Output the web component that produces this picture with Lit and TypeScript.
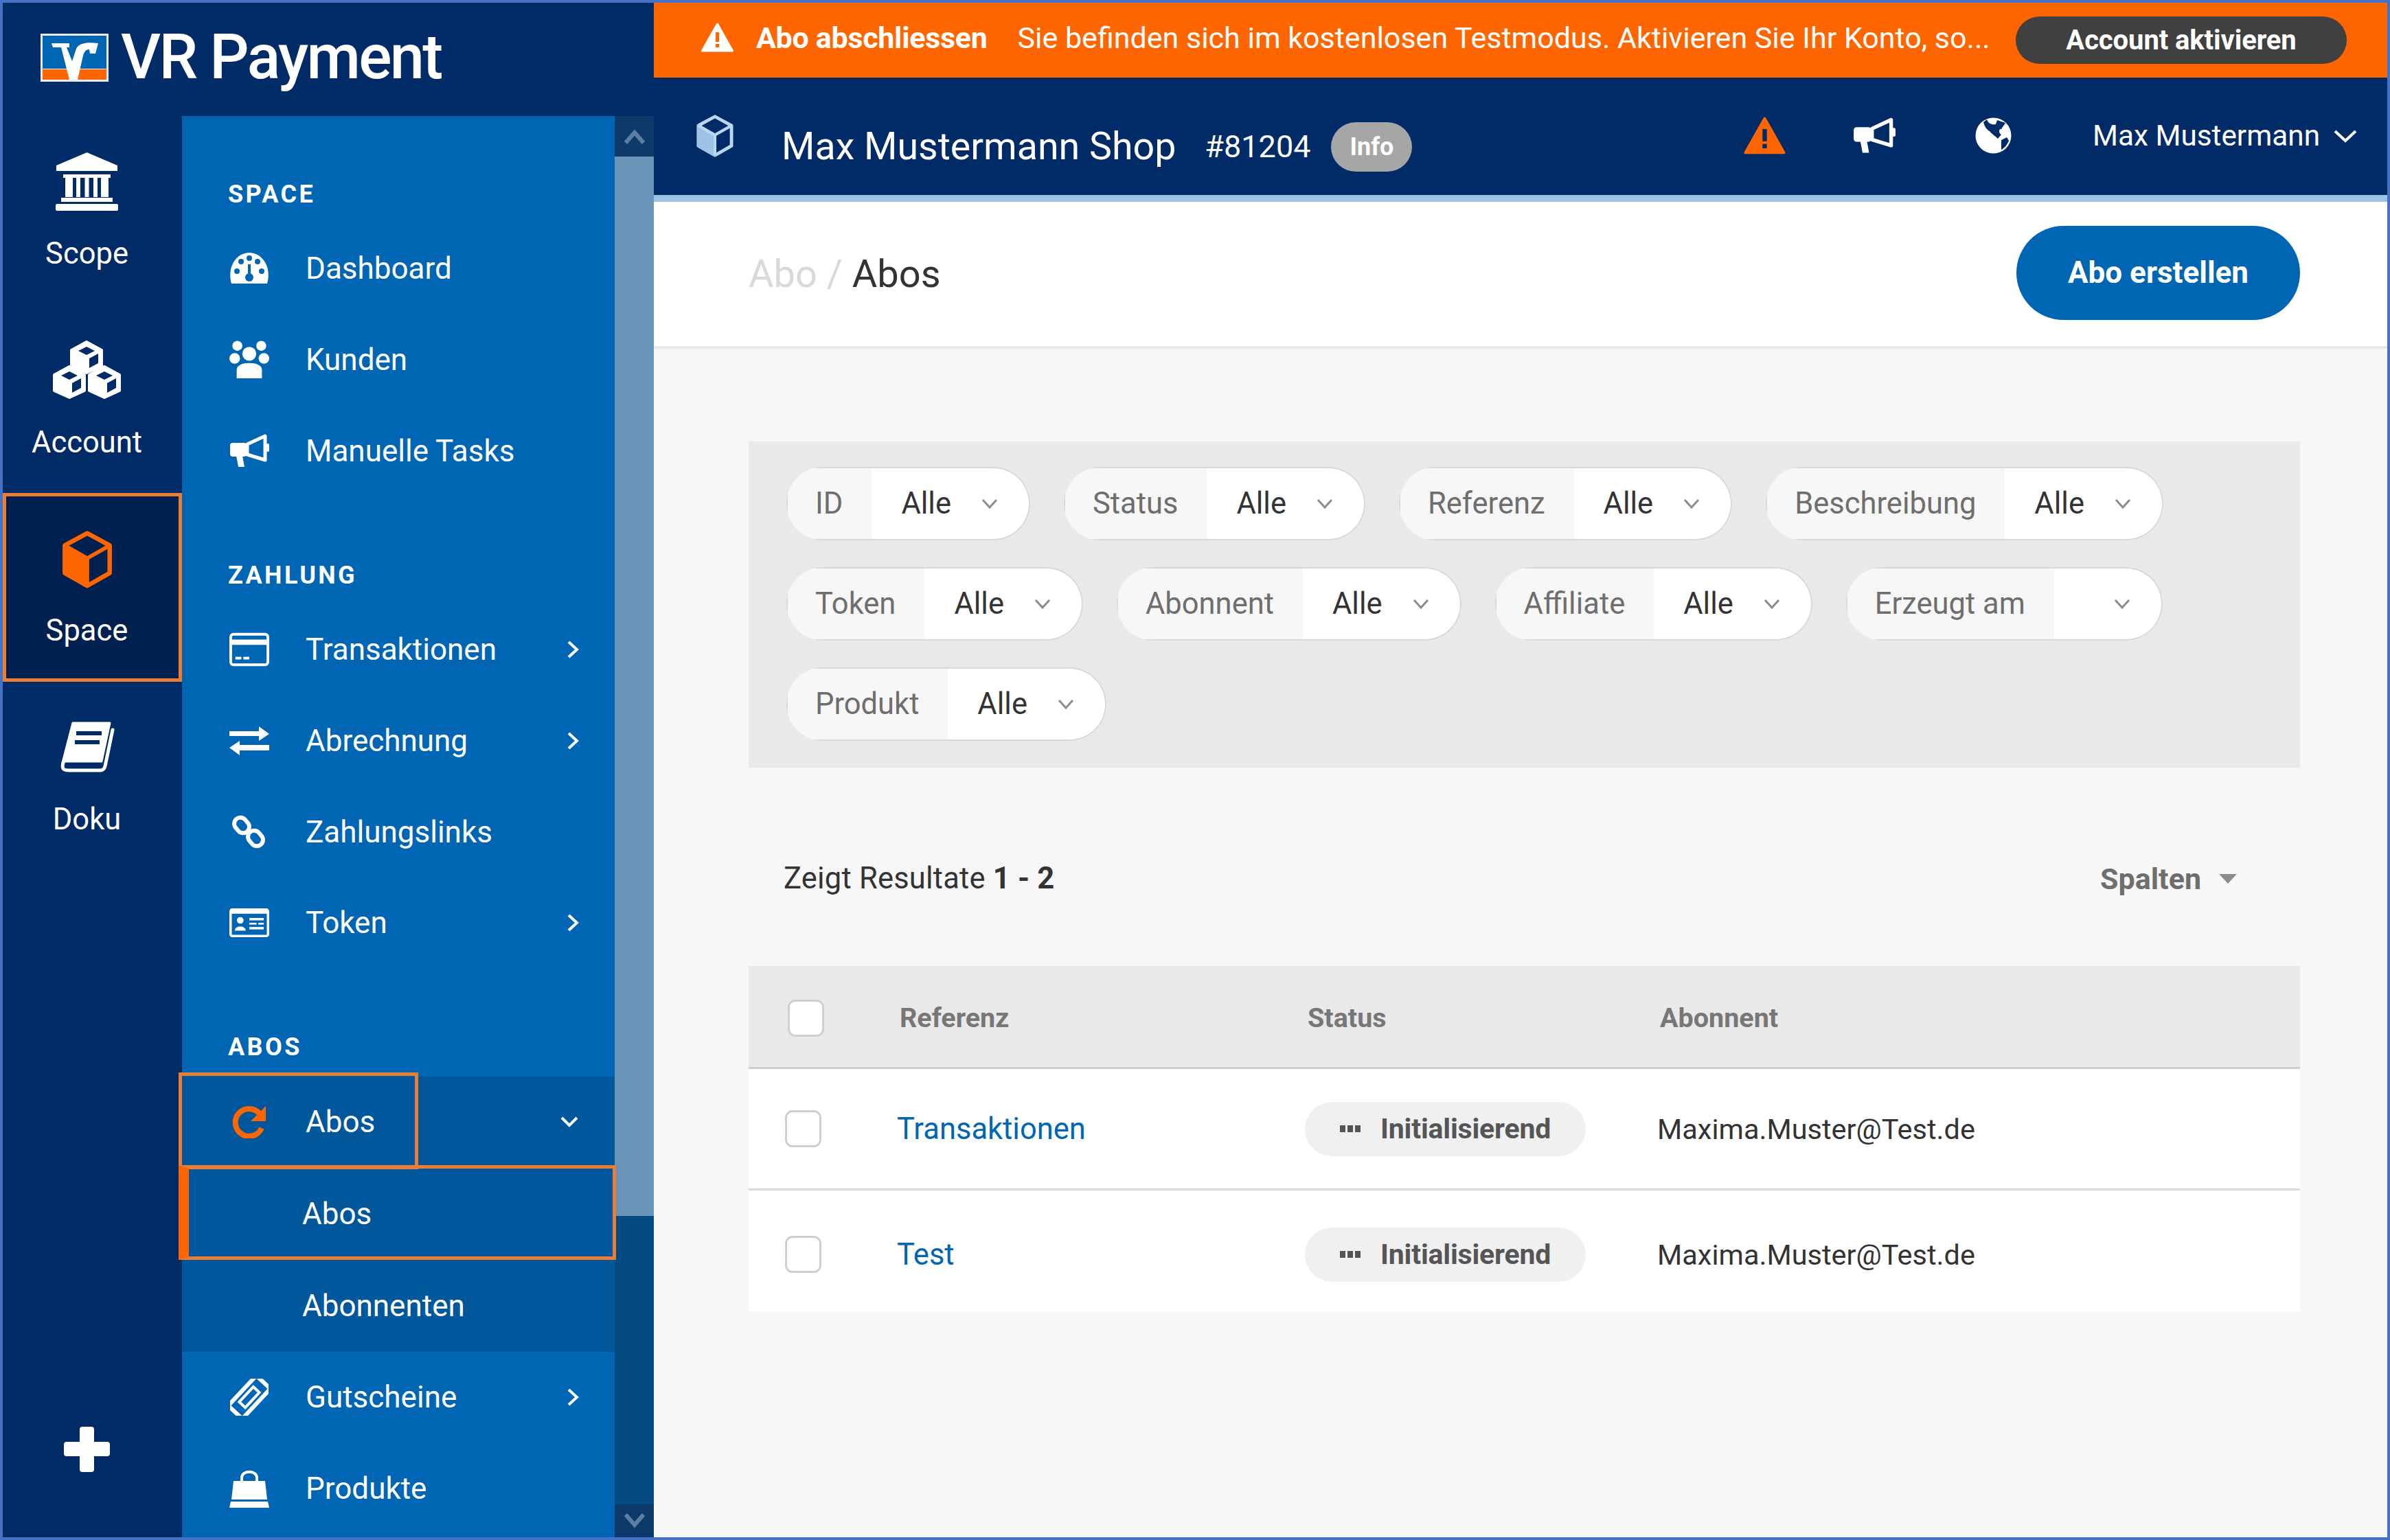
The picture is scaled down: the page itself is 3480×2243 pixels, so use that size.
import { LitElement, html, css, svg } from "lit";
import { customElement } from "lit/decorators.js";

const cube = (stroke: string, face: string, w: number, h: number) => html`<svg width=${w} height=${h} viewBox="0 0 80 90">
  <polygon points="40,4 75,23 75,66 40,86 5,66 5,23" fill="none" stroke=${stroke} stroke-width="7" stroke-linejoin="round"/>
  <polygon points="5,23 40,43 40,86 5,66" fill=${face} stroke=${face} stroke-width="5" stroke-linejoin="round"/>
  <polyline points="5,23 40,43 75,23" fill="none" stroke=${stroke} stroke-width="6"/>
  <line x1="40" y1="43" x2="40" y2="86" stroke=${stroke} stroke-width="6"/>
</svg>`;

const miniCube = (cx: number, cy: number) => svg`
  <polygon points="${cx},${cy - 22} ${cx + 22},${cy - 10} ${cx + 22},${cy + 13} ${cx},${cy + 23} ${cx - 22},${cy + 13} ${cx - 22},${cy - 10}" fill="#fff" stroke="#fff" stroke-width="4" stroke-linejoin="round"/>
  <polygon points="${cx},${cy - 15} ${cx + 12},${cy - 9} ${cx},${cy - 3} ${cx - 12},${cy - 9}" fill="#002B67"/>
  <polygon points="${cx + 4},${cy + 2} ${cx + 17},${cy - 5} ${cx + 17},${cy + 9} ${cx + 4},${cy + 16}" fill="#002B67"/>`;

const scopeIcon = html`<svg width="91" height="85" viewBox="0 0 91 85" fill="#fff">
  <polygon points="45.5,0 90,19 90,27 1,27 1,19"/>
  <rect x="11" y="32" width="69" height="5"/>
  <rect x="14" y="37" width="11" height="28"/><rect x="30" y="37" width="6" height="28"/>
  <rect x="42.5" y="37" width="6" height="28"/><rect x="55" y="37" width="6" height="28"/>
  <rect x="66" y="37" width="11" height="28"/>
  <rect x="8" y="66" width="75" height="6"/><rect x="0" y="75" width="91" height="10" rx="2"/>
</svg>`;

const accountIcon = html`<svg width="103" height="86" viewBox="0 0 103 86">
  ${miniCube(51, 24)}${miniCube(26, 60)}${miniCube(77, 60)}
</svg>`;

const bookIcon = html`<svg width="81" height="74" viewBox="0 0 81 74">
  <path d="M20 2 H74 L62 58 H10 C8 58 6 59 5 60 Z" fill="#fff" stroke="#fff" stroke-width="3" stroke-linejoin="round"/>
  <path d="M6 60 C3 70 8 71 14 71 H60 C64 71 66 69 67 65 L78 12" fill="none" stroke="#fff" stroke-width="5" stroke-linecap="round"/>
  <rect x="25" y="14" width="37" height="6" fill="#002B67"/><rect x="23" y="27" width="36" height="6" fill="#002B67"/>
</svg>`;

const plusIcon = html`<svg width="67" height="66" viewBox="0 0 67 66" fill="#fff">
  <rect x="23" y="0" width="21" height="66" rx="4"/><rect x="0" y="22" width="67" height="21" rx="4"/>
</svg>`;

const blue = "#0066B3";
const ic: Record<string, unknown> = {
  gauge: html`<svg width="58" height="46" viewBox="0 0 58 46">
    <path d="M3 45 C-4 20 11 0 29 0 C47 0 62 20 55 45 Z" fill="#fff"/>
    <g fill=${blue}><circle cx="11" cy="27" r="4"/><circle cx="17" cy="13" r="4"/><circle cx="29" cy="8" r="4"/><circle cx="41" cy="13" r="4"/><circle cx="47" cy="27" r="4"/><circle cx="29" cy="36" r="6"/><rect x="27" y="17" width="4" height="18"/></g>
  </svg>`,
  users: html`<svg width="60" height="58" viewBox="0 0 60 58" fill="#fff">
    <circle cx="12" cy="8" r="7.5"/><circle cx="48" cy="8" r="7.5"/><ellipse cx="8" cy="27" rx="8" ry="8"/><ellipse cx="52" cy="27" rx="8" ry="8"/>
    <circle cx="30" cy="20" r="12" stroke=${blue} stroke-width="3"/>
    <path d="M10 58 V44 C10 36 20 33 30 33 C40 33 50 36 50 44 V58 Z" stroke=${blue} stroke-width="2"/>
  </svg>`,
  horn: html`<svg width="58" height="50" viewBox="0 0 58 50">
    <path d="M26 15 L52 3 V38 L26 30 Z" fill="none" stroke="#fff" stroke-width="5" stroke-linejoin="round"/>
    <rect x="1" y="13" width="24" height="20" rx="4" fill="#fff"/><path d="M10 32 H19 L22 48 H13 Z" fill="#fff"/>
    <rect x="53" y="14" width="5" height="12" rx="2" fill="#fff"/>
  </svg>`,
  card: html`<svg width="60" height="50" viewBox="0 0 60 50">
    <rect x="2" y="2" width="56" height="46" rx="4" fill="none" stroke="#fff" stroke-width="4"/>
    <rect x="2" y="10" width="56" height="8" fill="#fff"/><rect x="9" y="36" width="9" height="4" fill="#fff"/><rect x="21" y="36" width="9" height="4" fill="#fff"/>
  </svg>`,
  swap: html`<svg width="58" height="42" viewBox="0 0 58 42" fill="#fff">
    <path d="M0 7 H43 V0 L58 11 L43 21 V14 H0 Z"/><path d="M58 27 H15 V21 L0 31 L15 42 V35 H58 Z"/>
  </svg>`,
  link: html`<svg width="54" height="54" viewBox="0 0 54 54" fill="none" stroke="#fff" stroke-width="6">
    <rect x="4" y="8" width="24" height="18" rx="9" transform="rotate(50 16 17)"/>
    <rect x="24" y="27" width="24" height="18" rx="9" transform="rotate(50 36 36)"/>
  </svg>`,
  id: html`<svg width="66" height="48" viewBox="0 0 66 48">
    <rect x="2" y="2" width="62" height="44" rx="3" fill="none" stroke="#fff" stroke-width="4"/><rect x="2" y="2" width="62" height="7" fill="#fff"/>
    <circle cx="18" cy="20" r="5.5" fill="#fff"/><path d="M9 37 C9 28 27 28 27 37 Z" fill="#fff"/>
    <g fill="#fff"><rect x="33" y="16" width="24" height="4"/><rect x="33" y="24" width="12" height="3"/><rect x="48" y="24" width="9" height="3"/><rect x="33" y="31" width="24" height="4"/></g>
  </svg>`,
  refresh: html`<svg width="51" height="48" viewBox="0 0 51 48">
    <path d="M40 12 A 20 20 0 1 0 43 33" fill="none" stroke="#FF6600" stroke-width="8"/><polygon points="49,1 49,23 27,23" fill="#FF6600"/>
  </svg>`,
  ticket: html`<svg width="56" height="54" viewBox="0 0 56 54">
    <g transform="rotate(-47 28 27)" fill="none" stroke="#fff"><rect x="-2" y="13" width="60" height="28" rx="3" stroke-width="6"/><rect x="13" y="21" width="30" height="12" stroke-width="4"/></g>
  </svg>`,
  bag: html`<svg width="58" height="56" viewBox="0 0 58 56">
    <path d="M18 22 V12 C18 1 40 1 40 12 V22" fill="none" stroke="#fff" stroke-width="4"/>
    <polygon points="6,17 52,17 55,44 3,44" fill="#fff"/><polygon points="2,47 56,47 58,56 0,56" fill="#fff"/>
  </svg>`,
};

const chevR = html`<svg class="chev" width="18" height="26" viewBox="0 0 18 26"><path d="M3 2 L15 13 L3 24" fill="none" stroke="#fff" stroke-width="4"/></svg>`;
const chevD = html`<svg class="chev" width="28" height="18" viewBox="0 0 28 18"><path d="M3 3 L14 14 L25 3" fill="none" stroke="#fff" stroke-width="4"/></svg>`;

const warn = (bg: string, mark: string, w: number, h: number) => html`<svg width=${w} height=${h} viewBox="0 0 47 43">
  <polygon points="23.5,2 45.5,41 1.5,41" fill=${bg} stroke=${bg} stroke-width="3" stroke-linejoin="round"/>
  <rect x="21" y="14" width="5" height="14" fill=${mark}/><rect x="21" y="31" width="5" height="5" fill=${mark}/>
</svg>`;

const logo = html`<svg width="99" height="70" viewBox="0 0 99 70">
  <rect width="99" height="70" fill="#e8eef5"/><rect x="3" y="3" width="93" height="48" fill="#0066B3"/><rect x="3" y="52" width="93" height="15" fill="#FF6600"/>
  <path d="M16 14 H42 V20 H38 L46 40 L52 22 C56 14 66 12 84 14 L80 29 H72 L71 23 C66 23 64 26 62 32 L54 67 H42 L30 20 H18 Z" fill="#fff"/>
</svg>`;

const sections = [
  { t: "SPACE", rows: [{ i: "gauge", l: "Dashboard" }, { i: "users", l: "Kunden" }, { i: "horn", l: "Manuelle Tasks" }] },
  { t: "ZAHLUNG", rows: [{ i: "card", l: "Transaktionen", c: 1 }, { i: "swap", l: "Abrechnung", c: 1 }, { i: "link", l: "Zahlungslinks" }, { i: "id", l: "Token", c: 1 }] },
];
const filters = [["ID", "Alle"], ["Status", "Alle"], ["Referenz", "Alle"], ["Beschreibung", "Alle"], ["Token", "Alle"], ["Abonnent", "Alle"], ["Affiliate", "Alle"], ["Erzeugt am", ""], ["Produkt", "Alle"]];
const rowsData = ["Transaktionen", "Test"];

@customElement("app-root")
export class AppRoot extends LitElement {
  static styles = css`
    :host { display: block; width: 3480px; height: 2243px; box-sizing: border-box; border: 4px solid #4472C4; overflow: hidden;
      font-family: Roboto, "Noto Sans", sans-serif; font-size: 43.5px; color: #333; background: #F7F7F7; }
    .app { display: flex; height: 100%; }
    .left { width: 948px; flex: none; display: flex; flex-direction: column; background: #002B67; color: #fff; }
    .brand { height: 165px; flex: none; display: flex; align-items: center; gap: 18px; padding: 0 0 6px 55px; box-sizing: border-box; }
    .brand span { font-size: 90px; font-weight: 500; letter-spacing: -2.6px; line-height: 1; }
    .lower { flex: 1; min-height: 0; display: flex; overflow: hidden; }
    .rail { width: 261px; flex: none; display: flex; flex-direction: column; }
    .ri { height: 274.5px; flex: none; box-sizing: border-box; display: flex; flex-direction: column; align-items: center; padding-right: 16px; }
    .ri .ico { height: 190px; flex: none; display: flex; align-items: center; justify-content: center; }
    .ri .lab { margin-top: -25px; line-height: 72px; }
    .ri.sel { background: #002050; box-shadow: inset 0 0 0 5px #ED7D31; }
    .ri.sel .ico { padding-top: 4px; box-sizing: border-box; }
    .plus { margin-top: auto; padding: 0 16px 95px 0; display: flex; justify-content: center; }
    .side { width: 630px; flex: none; background: #0066B3; }
    .sec { padding-top: 72px; }
    .sec.first { padding-top: 71px; }
    .sec h3 { margin: 0; height: 85px; padding-left: 67px; display: flex; align-items: center; font-size: 36px; font-weight: 700; letter-spacing: 3.4px; line-height: 1; }
    .row { height: 132.7px; display: flex; align-items: center; position: relative; padding: 0 52px 0 69px; box-sizing: border-box; }
    .row .ib { width: 58px; flex: none; display: flex; justify-content: center; }
    .row .tx { margin-left: 53px; font-size: 44px; }
    .row .chev { margin-left: auto; }
    .group { background: #00579B; }
    .row.sub { padding-left: 175px; height: 134px; font-size: 44px; }
    .mark { position: absolute; top: -6px; bottom: -2px; left: -5px; border: 5px solid #ED7D31; box-sizing: border-box; pointer-events: none; z-index: 2; }
    .mark.a { width: 349px; }
    .mark.b { top: -4px; bottom: 0; right: -2px; border-left: 15px solid #FF6600; }
    .scroll { width: 57px; flex: none; display: flex; flex-direction: column; }
    .sb { flex: none; display: flex; align-items: center; justify-content: center; background: #0B3A6B; }
    .sb.up { height: 59px; }
    .sb.down { height: 48px; }
    .thumb { height: 1543px; flex: none; background: #6A93B8; }
    .track { flex: 1; background: #044A83; }
    .main { flex: 1; min-width: 0; display: flex; flex-direction: column; }
    .banner { height: 109px; flex: none; background: #FF6600; color: #fff; display: flex; align-items: center; padding: 0 59px 8px 69px; box-sizing: border-box; }
    .banner b { margin-left: 33px; font-size: 43px; font-weight: 700; letter-spacing: -0.3px; }
    .banner .msg { margin-left: 44px; font-size: 43px; }
    .btn-dark { margin: 8px 0 0 auto; width: 482px; height: 69px; border-radius: 35px; background: #404040; display: flex; align-items: center; justify-content: center; font-size: 40px; font-weight: 700; letter-spacing: -0.1px; }
    .nav { height: 181px; flex: none; box-sizing: border-box; background: #002B67; color: #fff; border-bottom: 10px solid #9DC3E6; display: flex; align-items: center; padding: 30px 44px 0 58px; }
    .nav .shop { margin-left: 66px; font-size: 55.5px; }
    .nav .num { margin-left: 42px; font-size: 45px; }
    .badge { margin-left: 30px; width: 118px; height: 72px; border-radius: 36px; background: #A6A6A6; display: flex; align-items: center; justify-content: center; font-size: 36px; font-weight: 700; }
    .nav .cube { margin-bottom: 32px; display: flex; }
    .tools { margin: 0 0 32px auto; display: flex; align-items: center; font-size: 42.3px; }
    .tools .w { margin-right: 98px; display: flex; }
    .tools .m { margin-right: 116px; display: flex; }
    .tools .g { margin-right: 118px; display: flex; }
    .tools .user { margin-right: 20px; }
    .head { height: 214px; flex: none; box-sizing: border-box; background: #fff; border-bottom: 4px solid #E9E9E9; display: flex; align-items: center; justify-content: space-between; padding: 0 127px 0 138px; }
    .crumb { font-size: 56px; }
    .crumb .mute { color: #D9D9D9; }
    .btn { width: 413px; height: 137px; margin-top: -4px; border-radius: 69px; background: #0066B3; color: #fff; display: flex; align-items: center; justify-content: center; font-size: 44px; font-weight: 700; }
    .content { flex: 1; padding: 135px 127px 0 138px; }
    .filters { height: 475px; box-sizing: border-box; background: #E9E9E9; padding: 37px 55px; display: flex; flex-wrap: wrap; gap: 39px 49px; align-content: flex-start; }
    .chip { height: 107px; display: flex; border-radius: 54px; overflow: hidden; box-shadow: inset 0 0 0 2px #D8D8D8; background: #fff; }
    .chip .k { background: #F7F7F7; color: #6E6E6E; padding: 0 42px; display: flex; align-items: center; box-shadow: inset 0 2px 0 #D8D8D8, inset 2px 0 0 #D8D8D8, inset 0 -2px 0 #D8D8D8; }
    .chip .v { display: flex; align-items: center; gap: 44px; padding: 0 47px 0 43px; }
    .chip svg { flex: none; }
    .bar { height: 289px; box-sizing: border-box; padding: 34px 92px 0 51px; display: flex; align-items: center; justify-content: space-between; letter-spacing: 0.2px; }
    .bar b { font-weight: 700; }
    .spalten { display: flex; align-items: center; gap: 26px; color: #6E6E6E; font-size: 43px; font-weight: 700; letter-spacing: 0; }
    .tri { width: 0; height: 0; border-left: 13px solid transparent; border-right: 13px solid transparent; border-top: 14px solid #8C8C8C; }
    .trow { display: grid; grid-template-columns: 216px 594px 513px 1fr; align-items: center; box-sizing: border-box; background: #fff; border-bottom: 3px solid #D9D9D9; height: 177px; }
    .trow.hd { background: #E9E9E9; height: 150px; padding-top: 4px; border-bottom: 3px solid #CFCFCF; color: #777; font-size: 39.5px; font-weight: 700; grid-template-columns: 220px 594px 513px 1fr; }
    .trow.last { border-bottom: none; height: 176px; padding-top: 10px; }
    .cbc { padding-left: 53px; display: flex; }
    .hd .cbc { padding-left: 57px; }
    .cb { width: 53px; height: 54px; box-sizing: border-box; border: 3px solid #CFCFCF; border-radius: 11px; background: #fff; }
    a { color: #0066B3; text-decoration: none; }
    .st { display: inline-flex; align-items: center; width: 409px; height: 79px; box-sizing: border-box; padding-left: 51px; gap: 29px; border-radius: 40px; background: #F0F0F0; color: #555; font-size: 41px; font-weight: 700; letter-spacing: -0.2px; }
    .dots { display: flex; gap: 3px; }
    .dots i { width: 8px; height: 10px; background: #555; display: block; }
    .mail { font-size: 41.5px; }
  `;

  private sectionT(s: (typeof sections)[number], first: boolean) {
    return html`<div class="sec ${first ? "first" : ""}"><h3>${s.t}</h3>
      ${s.rows.map((r: any) => html`<div class="row"><span class="ib">${ic[r.i]}</span><span class="tx">${r.l}</span>${r.c ? chevR : ""}</div>`)}
    </div>`;
  }

  render() {
    return html`<div class="app">
      <div class="left">
        <div class="brand">${logo}<span>VR Payment</span></div>
        <div class="lower">
          <nav class="rail">
            <div class="ri"><div class="ico">${scopeIcon}</div><div class="lab">Scope</div></div>
            <div class="ri"><div class="ico">${accountIcon}</div><div class="lab">Account</div></div>
            <div class="ri sel"><div class="ico">${cube("#FF6600", "#FF6600", 84, 84)}</div><div class="lab">Space</div></div>
            <div class="ri"><div class="ico">${bookIcon}</div><div class="lab">Doku</div></div>
            <div class="plus">${plusIcon}</div>
          </nav>
          <div class="side">
            ${this.sectionT(sections[0], true)}
            ${this.sectionT(sections[1], false)}
            <div class="sec"><h3>ABOS</h3>
              <div class="group">
                <div class="row"><span class="ib">${ic.refresh}</span><span class="tx">Abos</span>${chevD}<span class="mark a"></span></div>
                <div class="row sub"><span>Abos</span><span class="mark b"></span></div>
                <div class="row sub"><span>Abonnenten</span></div>
              </div>
              <div class="row"><span class="ib">${ic.ticket}</span><span class="tx">Gutscheine</span>${chevR}</div>
              <div class="row"><span class="ib">${ic.bag}</span><span class="tx">Produkte</span></div>
            </div>
          </div>
          <div class="scroll">
            <div class="sb up"><svg width="32" height="24" viewBox="0 0 32 24"><path d="M3 21 L16 6 L29 21" fill="none" stroke="#5F7F9F" stroke-width="6"/></svg></div>
            <div class="thumb"></div>
            <div class="track"></div>
            <div class="sb down"><svg width="32" height="24" viewBox="0 0 32 24"><path d="M3 3 L16 18 L29 3" fill="none" stroke="#5F7F9F" stroke-width="6"/></svg></div>
          </div>
        </div>
      </div>
      <div class="main">
        <div class="banner">${warn("#fff", "#FF6600", 47, 43)}<b>Abo abschliessen</b><span class="msg">Sie befinden sich im kostenlosen Testmodus. Aktivieren Sie Ihr Konto, so...</span><div class="btn-dark">Account aktivieren</div></div>
        <div class="nav">
          <span class="cube">${cube("#BBD6F0", "#9DC3E6", 62, 62)}</span>
          <span class="shop">Max Mustermann Shop</span><span class="num">#81204</span><span class="badge">Info</span>
          <div class="tools">
            <span class="w">${warn("#FF6600", "#002B67", 61, 55)}</span>
            <span class="m"><svg width="62" height="54" viewBox="0 0 58 50">
              <path d="M26 15 L52 3 V38 L26 30 Z" fill="none" stroke="#fff" stroke-width="5" stroke-linejoin="round"/>
              <rect x="1" y="13" width="24" height="20" rx="4" fill="#fff"/><path d="M10 32 H19 L22 48 H13 Z" fill="#fff"/><rect x="53" y="14" width="5" height="12" rx="2" fill="#fff"/>
            </svg></span>
            <span class="g"><svg width="53" height="53" viewBox="0 0 53 53"><circle cx="26.5" cy="26.5" r="26" fill="#fff"/>
              <path d="M17 3 C19 9 24 11 30 10 L32 4 L44 8 L38 17 C34 16 34 23 38 25 L33 31 C28 26 24 24 21 20 C17 18 14 14 12 7 Z" fill="#002B67"/>
              <path d="M38 33 L46 29 L49 34 C46 41 42 45 38 47 Z" fill="#002B67"/></svg></span>
            <span class="user">Max Mustermann</span>
            <svg width="34" height="20" viewBox="0 0 34 20"><path d="M2 3 L17 17 L32 3" fill="none" stroke="#fff" stroke-width="4"/></svg>
          </div>
        </div>
        <div class="head">
          <div class="crumb"><span class="mute">Abo / </span>Abos</div>
          <div class="btn">Abo erstellen</div>
        </div>
        <div class="content">
          <div class="filters">
            ${filters.map(([k, v]) => html`<div class="chip"><span class="k">${k}</span><span class="v"><span>${v}</span><svg width="24" height="15" viewBox="0 0 24 15"><path d="M2 2 L12 13 L22 2" fill="none" stroke="#8C8C8C" stroke-width="3"/></svg></span></div>`)}
          </div>
          <div class="bar"><div>Zeigt Resultate <b>1 - 2</b></div><div class="spalten">Spalten<span class="tri"></span></div></div>
          <div class="trow hd"><div class="cbc"><span class="cb"></span></div><div>Referenz</div><div>Status</div><div>Abonnent</div></div>
          ${rowsData.map((r, i) => html`<div class="trow ${i === rowsData.length - 1 ? "last" : ""}">
            <div class="cbc"><span class="cb"></span></div><div><a>${r}</a></div>
            <div><span class="st"><span class="dots"><i></i><i></i><i></i></span>Initialisierend</span></div>
            <div class="mail">Maxima.Muster@Test.de</div></div>`)}
        </div>
      </div>
    </div>`;
  }
}
